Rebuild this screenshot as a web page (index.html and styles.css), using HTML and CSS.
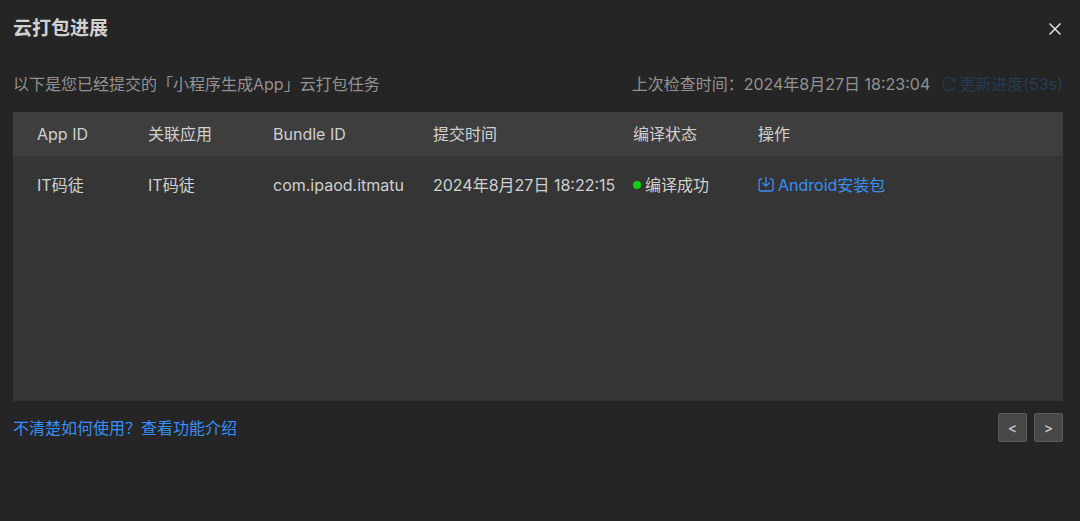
FILE: index.html
```
<!DOCTYPE html>
<html lang="zh-CN">
<head>
  <meta charset="UTF-8" />
  <meta name="viewport" content="width=device-width, initial-scale=1.0" />
  <title>云打包进展</title>
  <link rel="stylesheet" href="styles.css">
</head>
<body>
  <div class="dialog">
    <header class="dialog-header">
      <h1>云打包进展</h1>
      <button class="close-btn" type="button" aria-label="关闭">
        <svg width="12" height="12" viewBox="0 0 12 12" fill="none" stroke="currentColor" stroke-width="1.5">
          <path d="M0.5 0.5L11.5 11.5M11.5 0.5L0.5 11.5" />
        </svg>
      </button>
    </header>

    <div class="summary">
      <span>以下是您已经提交的「小程序生成App」云打包任务</span>
      <div class="check">
        <span>上次检查时间：2024年8月27日 18:23:04</span>
        <button class="refresh-btn" type="button" disabled>
          <svg width="14" height="14" viewBox="0 0 14 14" fill="none" stroke="currentColor" stroke-width="1.2">
            <path d="M12.9 9A6.3 6.3 0 1 1 12.6 4.2" />
            <path d="M13.2 1.8V4.6H10.4" />
          </svg>
          更新进度(53s)
        </button>
      </div>
    </div>

    <div class="table-box">
      <table class="task-table">
        <colgroup>
          <col class="col-app">
          <col class="col-related">
          <col class="col-bundle">
          <col class="col-time">
          <col class="col-status">
          <col>
        </colgroup>
        <thead>
          <tr>
            <th>App ID</th>
            <th>关联应用</th>
            <th>Bundle ID</th>
            <th>提交时间</th>
            <th>编译状态</th>
            <th>操作</th>
          </tr>
        </thead>
        <tbody>
          <tr>
            <td>IT码徒</td>
            <td>IT码徒</td>
            <td>com.ipaod.itmatu</td>
            <td>2024年8月27日 18:22:15</td>
            <td><span class="status">编译成功</span></td>
            <td>
              <a href="#" class="download">
                <svg width="16" height="16" viewBox="0 0 16 16" fill="none" stroke="currentColor" stroke-width="1.3">
                  <path d="M4 2H3A2 2 0 0 0 1 4V12A2 2 0 0 0 3 14H13A2 2 0 0 0 15 12V4A2 2 0 0 0 13 2H12" />
                  <path d="M8 0V9M4.5 5.7L8 9.2L11.5 5.7" />
                </svg>
                Android安装包
              </a>
            </td>
          </tr>
        </tbody>
      </table>
    </div>

    <footer class="dialog-footer">
      <a href="#">不清楚如何使用？查看功能介绍</a>
      <div class="pager">
        <button type="button" aria-label="上一页">&lt;</button>
        <button type="button" aria-label="下一页">&gt;</button>
      </div>
    </footer>
  </div>
</body>
</html>
```
FILE: styles.css
```
* {
  box-sizing: border-box;
}

body {
  margin: 0;
  min-height: 100vh;
  background-color: #252525;
  color: #d0d0d0;
  font-family: Inter, "Noto Sans CJK SC", sans-serif;
  font-size: 16px;
  line-height: 24px;
}

button {
  font: inherit;
  cursor: pointer;
}

a {
  color: #388ff7;
  text-decoration: none;
}

.dialog {
  padding: 14px 17px 24px 13px;
}

.dialog-header {
  display: flex;
  justify-content: space-between;
  align-items: center;
  height: 30px;
}

h1 {
  margin: 0;
  font-size: 19px;
  font-weight: 700;
}

.close-btn {
  display: flex;
  padding: 2px;
  border: none;
  background: none;
  color: #e0e0e0;
}

.summary {
  display: flex;
  justify-content: space-between;
  margin: 28px 0 16px;
  color: #929292;
}

.check {
  display: flex;
  gap: 12px;
}

.refresh-btn {
  display: flex;
  align-items: center;
  gap: 3px;
  padding: 0;
  border: none;
  background: none;
  color: #263a53;
  cursor: default;
}

.table-box {
  min-height: 289px;
  background-color: #353535;
}

.task-table {
  width: 100%;
  table-layout: fixed;
  border-collapse: collapse;
  white-space: nowrap;
}

.task-table th,
.task-table td {
  padding: 10px 0;
  text-align: left;
  font-weight: 400;
}

.task-table th {
  background-color: #3e3e3e;
}

.task-table td {
  padding: 17px 0;
}

.task-table th:first-child,
.task-table td:first-child {
  padding-left: 24px;
}

.col-app {
  width: 135px;
}

.col-related,
.col-status {
  width: 125px;
}

.col-bundle {
  width: 160px;
}

.col-time {
  width: 200px;
}

.status,
.download {
  display: flex;
  align-items: center;
  gap: 4px;
}

.status::before {
  content: "";
  width: 8px;
  height: 8px;
  border-radius: 50%;
  background-color: #0fd00f;
}

.dialog-footer {
  display: flex;
  justify-content: space-between;
  align-items: center;
  margin-top: 12px;
}

.pager {
  display: flex;
  gap: 7px;
}

.pager button {
  width: 29px;
  height: 29px;
  padding: 0;
  border: 1px solid #5a5a5a;
  border-radius: 2px;
  background-color: #484848;
  color: #c8c8c8;
  font-size: 14px;
  font-weight: 500;
  line-height: 20px;
}
```
